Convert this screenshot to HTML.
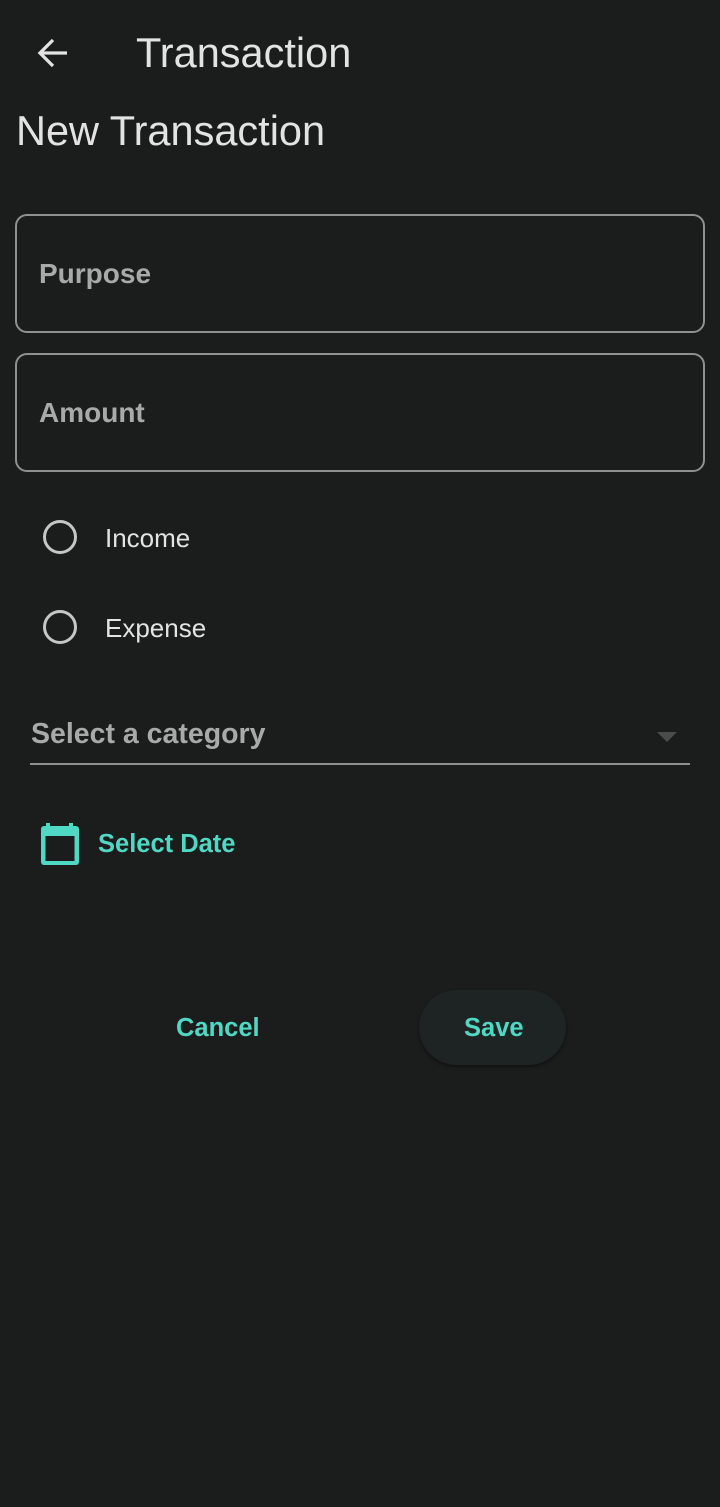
<!DOCTYPE html>
<html><head><meta charset="utf-8"><style>
html,body{margin:0;padding:0;background:#1b1c1c;width:720px;height:1507px;overflow:hidden;font-family:"Liberation Sans",sans-serif;}
.abs{position:absolute;}
.t{color:#e3e3e3;}
.field{position:absolute;left:15px;width:690px;height:119px;border:2px solid #8e9190;border-radius:12px;box-sizing:border-box;}
.field span{position:absolute;left:22px;top:42px;font-size:28px;color:#a8aaa9;font-weight:bold;}
.radio{position:absolute;left:43px;width:34px;height:34px;border:3px solid #c4c7c6;border-radius:50%;box-sizing:border-box;}
.rl{position:absolute;left:105px;font-size:26px;color:#e3e3e3;}
.acc{color:#4fd8c4;font-weight:bold;font-size:25.5px;}
</style></head><body>
<svg class="abs" style="left:36px;top:36px" width="34" height="34" viewBox="0 0 34 34"><path d="M31 17H5M17 4L4 17L17 30" stroke="#e3e3e3" stroke-width="3.3" fill="none"/></svg>
<div class="abs t" style="left:136px;top:29px;font-size:41.5px;">Transaction</div>
<div class="abs t" style="left:16px;top:107px;font-size:41.5px;">New Transaction</div>
<div class="field" style="top:214px"><span>Purpose</span></div>
<div class="field" style="top:353px"><span>Amount</span></div>
<div class="radio" style="top:520px"></div><div class="rl" style="top:523px">Income</div>
<div class="radio" style="top:610px"></div><div class="rl" style="top:613px">Expense</div>
<div class="abs" style="left:31px;top:718px;font-size:28.5px;color:#a8aaa9;font-weight:bold;">Select a category</div>
<div class="abs" style="left:657px;top:732px;width:0;height:0;border-left:10px solid transparent;border-right:10px solid transparent;border-top:10px solid #4a4c4c;"></div>
<div class="abs" style="left:30px;top:763px;width:660px;height:2px;background:#8e9190;"></div>
<svg class="abs" style="left:40px;top:822px" width="40" height="44" viewBox="0 0 40 44"><rect x="6" y="1" width="4" height="6" fill="#4fd8c4"/><rect x="29" y="1" width="4" height="6" fill="#4fd8c4"/><rect x="1" y="4" width="38" height="39" rx="3" fill="#4fd8c4"/><rect x="5.5" y="14" width="29" height="25" fill="#1b1c1c"/></svg>
<div class="abs acc" style="left:98px;top:830px;">Select Date</div>
<div class="abs acc" style="left:176px;top:1014px;">Cancel</div>
<div class="abs" style="left:419px;top:990px;width:147px;height:75px;border-radius:38px;background:#1e2423;box-shadow:0 2px 3px rgba(0,0,0,.4);"></div>
<div class="abs acc" style="left:464px;top:1014px;">Save</div>
</body></html>
